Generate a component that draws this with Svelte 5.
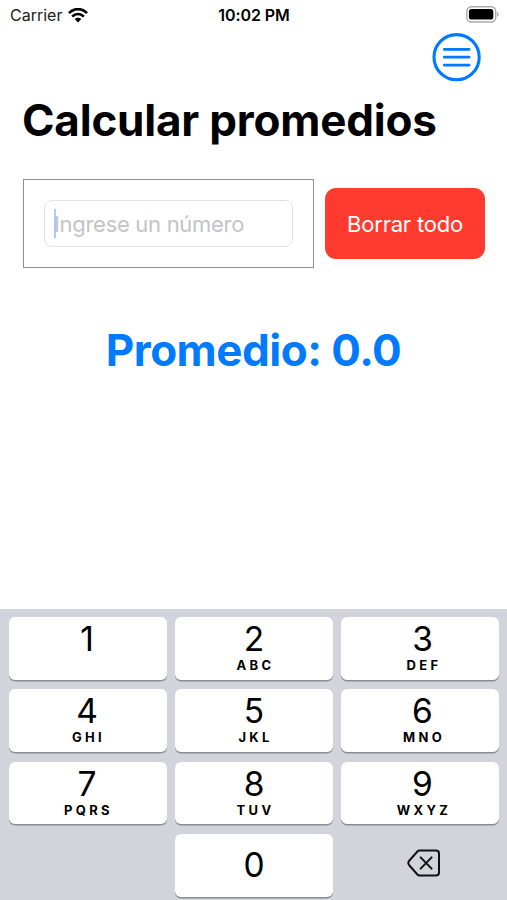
<script lang="ts">
	interface Key {
		digit: string;
		letters?: string;
	}

	const keys: Key[] = [
		{ digit: '1', letters: '' },
		{ digit: '2', letters: 'ABC' },
		{ digit: '3', letters: 'DEF' },
		{ digit: '4', letters: 'GHI' },
		{ digit: '5', letters: 'JKL' },
		{ digit: '6', letters: 'MNO' },
		{ digit: '7', letters: 'PQRS' },
		{ digit: '8', letters: 'TUV' },
		{ digit: '9', letters: 'WXYZ' }
	];

	let entry = $state('');
	let numbers = $state<number[]>([]);

	let average = $derived(
		numbers.length ? numbers.reduce((sum, n) => sum + n, 0) / numbers.length : 0
	);

	function press(digit: string) {
		entry += digit;
	}

	function addNumber() {
		if (entry) numbers.push(Number(entry));
		entry = '';
	}

	function clearAll() {
		entry = '';
		numbers = [];
	}
</script>

<div class="screen">
	<header class="status-bar">
		<div class="carrier">
			<span>Carrier</span>
			<svg width="20" height="15" viewBox="0 0 20 15" aria-hidden="true">
				<g fill="none" stroke="#000" stroke-width="2.7">
					<path d="M1 5.2C6 -.3 14 -.3 19 5.2" />
					<path d="M4.2 8.6C7.5 5.1 12.5 5.1 15.8 8.6" />
				</g>
				<path d="M6.7 11.1C8.5 9.2 11.5 9.2 13.3 11.1L10 14.5Z" />
			</svg>
		</div>
		<span class="time">10:02 PM</span>
		<div class="battery">
			<svg width="33" height="17" viewBox="0 0 33 17" aria-hidden="true">
				<rect x=".8" y=".8" width="28.9" height="15.2" rx="4.5" fill="#fff" stroke="#aaa" stroke-width="1.4" />
				<rect x="2.9" y="3" width="24.4" height="10.6" rx="2.6" />
				<path d="M31 6.1C33.1 7 33.1 9.9 31 10.8Z" fill="#aaa" />
			</svg>
		</div>
	</header>

	<main>
		<div class="toolbar">
			<button class="menu" aria-label="Menú">
				<svg width="50" height="50" viewBox="0 0 50 50">
					<g fill="none" stroke="#007aff" stroke-linecap="round">
						<circle cx="25.6" cy="25.2" r="22.6" stroke-width="3.1" />
						<path d="M13.3 17.4H38.1M13.3 25.2H38.1M13.3 33.1H38.1" stroke-width="2.8" />
					</g>
				</svg>
			</button>
		</div>

		<h1>Calcular promedios</h1>

		<div class="form">
			<div class="frame">
				<div class="field">
					<span class="caret"></span>
					<input bind:value={entry} onchange={addNumber} inputmode="numeric" placeholder="Ingrese un número" />
				</div>
			</div>
			<button class="clear" onclick={clearAll}>Borrar todo</button>
		</div>

		<p class="average">Promedio: {average.toFixed(1)}</p>
	</main>

	<div class="keyboard">
		{#each keys as key}
			<button class="key" onclick={() => press(key.digit)}>
				<span class="digit">{key.digit}</span>
				<span class="letters">{key.letters}</span>
			</button>
		{/each}
		<span></span>
		<button class="key zero" onclick={() => press('0')}>
			<span class="digit">0</span>
		</button>
		<button class="delete" aria-label="Borrar" onclick={() => (entry = entry.slice(0, -1))}>
			<svg width="34" height="28" viewBox="0 0 34 28">
				<g fill="none" stroke="#111" stroke-width="2" stroke-linecap="round" stroke-linejoin="round">
					<path d="M12.4 1.6H29Q32 1.6 32 4.6V23.4Q32 26.4 29 26.4H12.4Q11.3 26.4 10.4 25.5L2 16Q.6 14 2 12L10.4 2.5Q11.3 1.6 12.4 1.6Z" />
					<path d="M13.6 8.4L24.6 19.6M24.6 8.4L13.6 19.6" />
				</g>
			</svg>
		</button>
	</div>
</div>

<style>
	:global(body) {
		margin: 0;
		background: #fff;
	}

	.screen {
		display: flex;
		flex-direction: column;
		height: 900px;
		overflow: hidden;
		background: #fff;
		color: #000;
		font-family: Inter, 'Liberation Sans', sans-serif;
	}

	button {
		padding: 0;
		border: none;
		background: none;
		color: inherit;
		font-family: inherit;
	}

	svg {
		display: block;
	}

	.status-bar {
		display: grid;
		grid-template-columns: 1fr auto 1fr;
		align-items: center;
		height: 30px;
		padding: 0 8px 0 10px;
		font-size: 16px;
	}

	.carrier {
		display: flex;
		align-items: center;
		gap: 6px;
		color: #222;
	}

	.time {
		padding-right: 1px;
		font-weight: 600;
		letter-spacing: -0.1px;
	}

	.battery {
		display: flex;
		justify-content: flex-end;
		padding-bottom: 2px;
	}

	main {
		flex: 1;
		padding: 2px 22px 0 23px;
	}

	.toolbar {
		display: flex;
		justify-content: flex-end;
		padding-right: 4px;
	}

	h1 {
		margin: 11px 0 0 -1px;
		font-size: 44px;
		font-weight: 700;
		line-height: 54px;
		letter-spacing: -0.2px;
		white-space: nowrap;
	}

	.form {
		display: flex;
		align-items: center;
		gap: 11px;
		margin-top: 32px;
	}

	.frame {
		box-sizing: border-box;
		width: 291px;
		height: 89px;
		padding: 20px;
		border: 1px solid #8e8e93;
	}

	.field {
		box-sizing: border-box;
		display: flex;
		align-items: center;
		height: 47px;
		padding-left: 9px;
		border: 1px solid #e3e3e5;
		border-radius: 8px;
	}

	.caret {
		width: 2px;
		height: 29px;
		margin-right: -2px;
		background: #a9cdf8;
	}

	input {
		width: 220px;
		padding: 0;
		border: none;
		outline: none;
		background: none;
		font-family: inherit;
		font-size: 22px;
		letter-spacing: -0.3px;
	}

	input::placeholder {
		color: #c4c4c6;
		opacity: 1;
	}

	.clear {
		flex: 1;
		height: 71px;
		border-radius: 11px;
		background: #ff3b30;
		color: #fff;
		font-size: 22px;
		letter-spacing: -0.2px;
	}

	.average {
		margin: 55px 1px 0 0;
		color: #007aff;
		font-size: 44px;
		font-weight: 700;
		line-height: 54px;
		letter-spacing: -0.5px;
		text-align: center;
		white-space: nowrap;
	}

	.keyboard {
		box-sizing: border-box;
		display: grid;
		grid-template-columns: repeat(3, 158px);
		grid-auto-rows: 62.8px;
		gap: 9.5px 8px;
		height: 291px;
		padding: 8px 8px 0 9px;
		background: #d1d4db;
	}

	.key {
		display: flex;
		flex-direction: column;
		align-items: center;
		padding-top: 4px;
		border-radius: 6px;
		background: #fff;
		box-shadow: 0 1.4px 0 #8b8d91;
	}

	.key:nth-child(3n + 1) {
		padding-right: 2px;
	}

	.key:nth-child(3n) {
		padding-left: 5px;
	}

	.digit {
		font-size: 33.5px;
		line-height: 37px;
	}

	.letters {
		padding-left: 3px;
		font-size: 13px;
		font-weight: 700;
		line-height: 15px;
		letter-spacing: 3.3px;
	}

	.key.zero {
		justify-content: center;
		padding: 0;
	}

	.delete {
		display: flex;
		align-items: center;
		justify-content: center;
		padding: 0 0 4px 7px;
	}
</style>
